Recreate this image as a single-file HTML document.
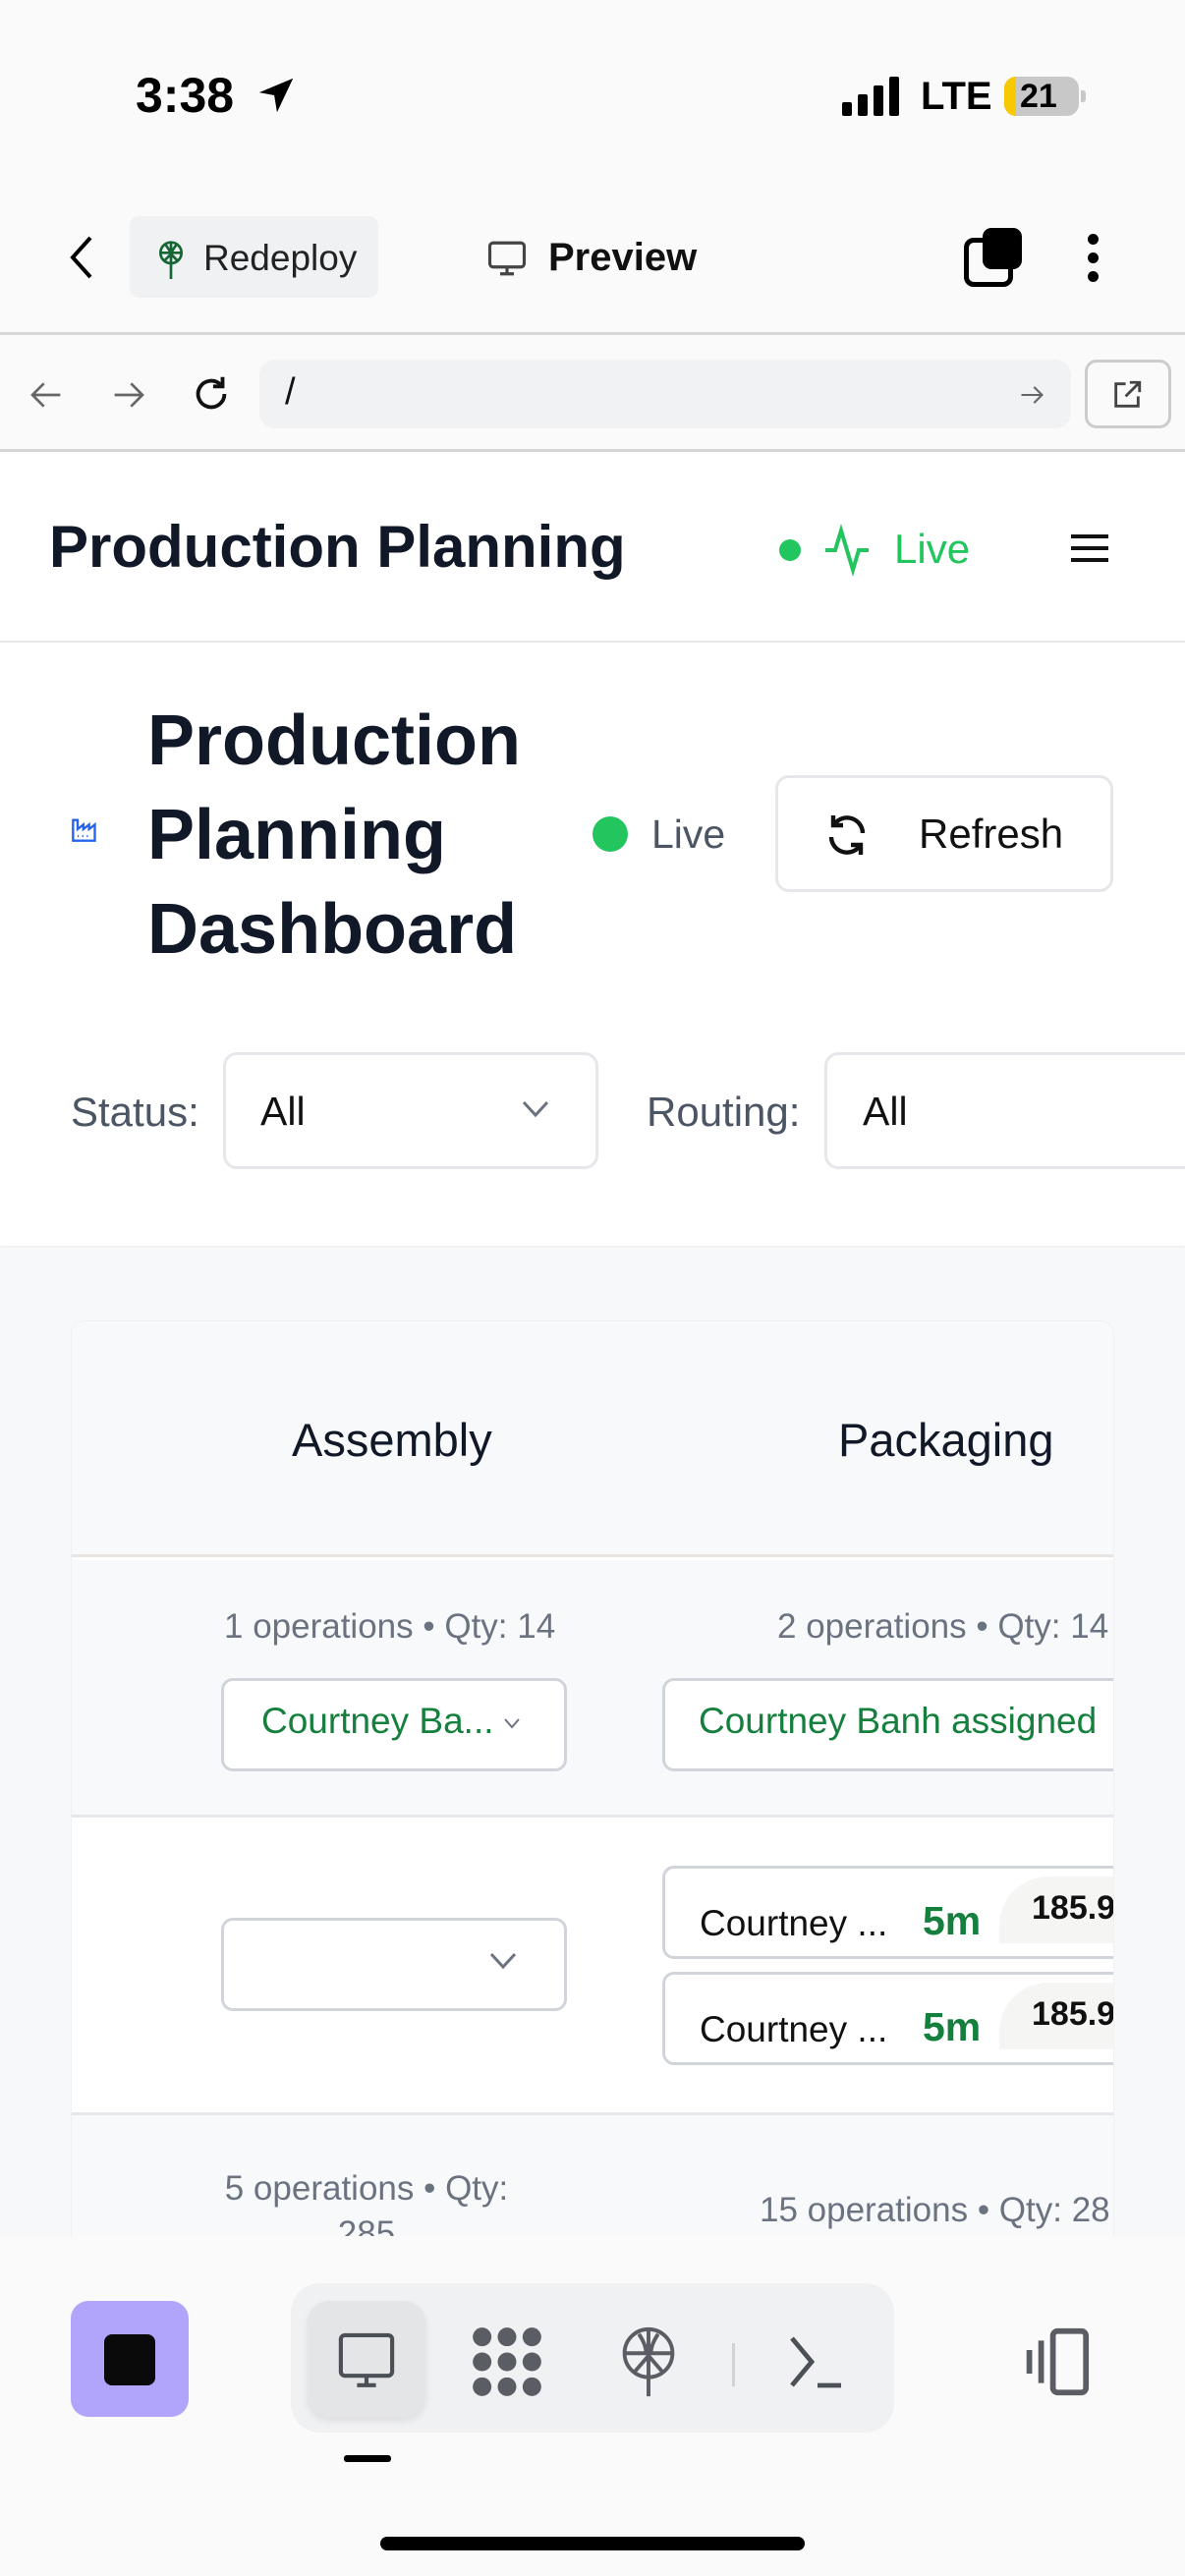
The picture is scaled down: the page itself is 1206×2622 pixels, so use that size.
<!DOCTYPE html>
<html><head><meta charset="utf-8"><style>
*{margin:0;padding:0;box-sizing:border-box}
body{width:1206px;height:2622px;background:#fafafa;font-family:"Liberation Sans",Arial,sans-serif;position:relative;overflow:hidden;color:#111827}
.a{position:absolute}
.t{white-space:nowrap}
</style></head><body>
<!-- status bar -->
<div class="a t" style="left:138px;top:68px;font-size:50px;font-weight:700;color:#000">3:38</div>
<svg class="a" style="left:258px;top:74px" width="46" height="46" viewBox="0 0 24 24"><path d="M21 3L3 10.5l8 1.5 1.5 9z" fill="#000"/></svg>
<div class="a" style="left:857px;top:104px;width:10px;height:14px;background:#000;border-radius:2px"></div>
<div class="a" style="left:873px;top:96px;width:10px;height:22px;background:#000;border-radius:2px"></div>
<div class="a" style="left:889px;top:87px;width:10px;height:31px;background:#000;border-radius:2px"></div>
<div class="a" style="left:905px;top:78px;width:10px;height:40px;background:#000;border-radius:2px"></div>
<div class="a t" style="left:937px;top:76px;font-size:40px;font-weight:700;color:#000">LTE</div>
<div class="a" style="left:1022px;top:78px;width:76px;height:40px;background:#c8c8c8;border-radius:12px;overflow:hidden"><div style="width:12px;height:40px;background:#f8c800"></div></div>
<div class="a" style="left:1100px;top:92px;width:5px;height:12px;background:#c8c8c8;border-radius:0 3px 3px 0"></div>
<div class="a t" style="left:1038px;top:79px;font-size:34px;font-weight:700;color:#000">21</div>
<!-- toolbar -->
<svg class="a" style="left:66px;top:238px" width="34" height="48" viewBox="0 0 34 48"><path d="M26 4L8 24l18 20" fill="none" stroke="#000" stroke-width="4"/></svg>
<div class="a" style="left:132px;top:220px;width:253px;height:83px;background:#f0f1f3;border-radius:10px"></div>
<svg class="a" style="left:158px;top:244px" width="32" height="40" viewBox="0 0 24 30"><circle cx="12" cy="10" r="8" fill="none" stroke="#166534" stroke-width="2"/><path d="M4 10h16M12 2v28M7 16l5-5 5 5M8 4c3 4 5 8 4 10M16 4c-3 4-5 8-4 10" fill="none" stroke="#166534" stroke-width="2"/></svg>
<div class="a t" style="left:207px;top:242px;font-size:37px;color:#222">Redeploy</div>
<svg class="a" style="left:494px;top:242px" width="44" height="42" viewBox="0 0 24 24"><rect x="2" y="3" width="20" height="14" rx="2" fill="none" stroke="#444" stroke-width="1.8"/><path d="M12 17v4M8 21h8" stroke="#444" stroke-width="1.8"/></svg>
<div class="a t" style="left:558px;top:240px;font-size:40px;font-weight:700;color:#111">Preview</div>
<div class="a" style="left:981px;top:242px;width:50px;height:50px;border:5px solid #000;border-radius:10px"></div>
<div class="a" style="left:1000px;top:232px;width:40px;height:42px;background:#000;border-radius:9px"></div>
<div class="a" style="left:1107px;top:238px;width:11px;height:11px;background:#000;border-radius:50%"></div>
<div class="a" style="left:1107px;top:257px;width:11px;height:11px;background:#000;border-radius:50%"></div>
<div class="a" style="left:1107px;top:276px;width:11px;height:11px;background:#000;border-radius:50%"></div>
<div class="a" style="left:0;top:338px;width:1206px;height:3px;background:#d6d6d6"></div>
<!-- url row -->
<svg class="a" style="left:28px;top:382px" width="40" height="40" viewBox="0 0 24 24"><path d="M20 12H4M10 5l-7 7 7 7" fill="none" stroke="#666" stroke-width="1.6"/></svg>
<svg class="a" style="left:110px;top:382px" width="40" height="40" viewBox="0 0 24 24"><path d="M4 12h16M14 5l7 7-7 7" fill="none" stroke="#666" stroke-width="1.6"/></svg>
<svg class="a" style="left:192px;top:378px" width="46" height="46" viewBox="0 0 24 24"><path d="M19 12a7 7 0 1 1-2.1-5" fill="none" stroke="#111" stroke-width="2"/><path d="M18 3v5h-5" fill="none" stroke="#111" stroke-width="2"/></svg>
<div class="a" style="left:264px;top:366px;width:826px;height:70px;background:#f1f2f4;border-radius:16px"></div>
<div class="a t" style="left:290px;top:378px;font-size:38px;color:#111">/</div>
<svg class="a" style="left:1036px;top:388px" width="28" height="28" viewBox="0 0 24 24"><path d="M3 12h18M14 5l7 7-7 7" fill="none" stroke="#666" stroke-width="1.8"/></svg>
<div class="a" style="left:1104px;top:366px;width:88px;height:70px;border:3px solid #ccc;border-radius:12px;background:#fafafa"></div>
<svg class="a" style="left:1130px;top:385px" width="34" height="34" viewBox="0 0 24 24"><path d="M11 4H4v16h16v-7M14 3h7v7M21 3l-10 10" fill="none" stroke="#444" stroke-width="2"/></svg>
<div class="a" style="left:0;top:457px;width:1206px;height:3px;background:#d6d6d6"></div>
<!-- app -->
<div class="a" style="left:0;top:460px;width:1206px;height:808px;background:#fff;box-shadow:0 2px 4px rgba(0,0,0,.06)"></div>
<div class="a t" style="left:50px;top:522px;font-size:60px;font-weight:700;color:#111827">Production Planning</div>
<div class="a" style="left:793px;top:549px;width:22px;height:22px;border-radius:50%;background:#22c55e"></div>
<svg class="a" style="left:838px;top:532px" width="48" height="56" viewBox="0 0 24 28"><path d="M1 14h5l3-10 6 20 3-10h5" fill="none" stroke="#22c55e" stroke-width="2"/></svg>
<div class="a t" style="left:910px;top:535px;font-size:42px;color:#22c55e">Live</div>
<div class="a" style="left:1090px;top:544px;width:38px;height:4px;background:#111"></div>
<div class="a" style="left:1090px;top:556px;width:38px;height:4px;background:#111"></div>
<div class="a" style="left:1090px;top:568px;width:38px;height:4px;background:#111"></div>
<div class="a" style="left:0;top:652px;width:1206px;height:2px;background:#e5e7eb"></div>
<svg class="a" style="left:72px;top:830px" width="28" height="28" viewBox="0 0 24 24"><path d="M2 22V4h4v8l5-4v4l5-4v4l5-4v14z" fill="none" stroke="#2563eb" stroke-width="2"/><path d="M6 18h1M10 18h1M14 18h1" stroke="#2563eb" stroke-width="2"/></svg>
<div class="a" style="left:150px;top:706px;font-size:72px;font-weight:700;line-height:96px;color:#111827">Production<br>Planning<br>Dashboard</div>
<div class="a" style="left:603px;top:831px;width:36px;height:36px;border-radius:50%;background:#22c55e"></div>
<div class="a t" style="left:663px;top:826px;font-size:41px;color:#4b5563">Live</div>
<div class="a" style="left:789px;top:789px;width:344px;height:119px;border:3px solid #e5e7eb;border-radius:14px;background:#fff"></div>
<svg class="a" style="left:838px;top:826px" width="48" height="48" viewBox="0 0 24 24"><path d="M20 11a8 8 0 0 0-14.5-4.5M4 13a8 8 0 0 0 14.5 4.5M5 2v5h5M19 22v-5h-5" fill="none" stroke="#111" stroke-width="2.2"/></svg>
<div class="a t" style="left:935px;top:825px;font-size:42px;color:#111">Refresh</div>
<div class="a t" style="left:72px;top:1108px;font-size:42px;color:#4b5563">Status:</div>
<div class="a" style="left:227px;top:1071px;width:382px;height:119px;border:3px solid #e5e7eb;border-radius:14px;background:#fff"></div>
<div class="a t" style="left:265px;top:1108px;font-size:41px;color:#111">All</div>
<svg class="a" style="left:530px;top:1118px" width="30" height="22" viewBox="0 0 30 22"><path d="M3 4l12 13 12-13" fill="none" stroke="#6b7280" stroke-width="3"/></svg>
<div class="a t" style="left:658px;top:1108px;font-size:42px;color:#4b5563">Routing:</div>
<div class="a" style="left:839px;top:1071px;width:400px;height:119px;border:3px solid #e5e7eb;border-radius:14px;background:#fff"></div>
<div class="a t" style="left:878px;top:1108px;font-size:41px;color:#111">All</div>
<!-- gray area -->
<div class="a" style="left:0;top:1270px;width:1206px;height:1006px;background:#f7f8fa"></div>
<div class="a" style="left:72px;top:1344px;width:1062px;height:940px;background:#fff;border:1px solid #eef0f2;border-radius:14px 14px 0 0;overflow:hidden">
  <div class="a" style="left:0;top:0;width:1062px;height:240px;background:#f8f9fb;border-bottom:3px solid #e7e5e4"></div>
  <div class="a t" style="left:224px;top:93px;font-size:47px;color:#111827">Assembly</div>
  <div class="a t" style="left:780px;top:93px;font-size:47px;color:#111827">Packaging</div>
  <div class="a" style="left:0;top:243px;width:1062px;height:262px;background:#f8f9fb;border-bottom:3px solid #e5e7eb"></div>
  <div class="a t" style="left:155px;top:291px;font-size:35px;color:#6b7280">1 operations • Qty: 14</div>
  <div class="a t" style="left:718px;top:291px;font-size:35px;color:#6b7280">2 operations • Qty: 14</div>
  <div class="a" style="left:152px;top:363px;width:352px;height:95px;border:3px solid #d1d5db;border-radius:12px;background:#fff"></div>
  <div class="a t" style="left:193px;top:386px;font-size:37px;color:#15803d">Courtney Ba...</div>
  <svg class="a" style="left:439px;top:402px" width="18" height="14" viewBox="0 0 18 14"><path d="M2 3l7 8 7-8" fill="none" stroke="#6b7280" stroke-width="2"/></svg>
  <div class="a" style="left:601px;top:363px;width:500px;height:95px;border:3px solid #d1d5db;border-radius:12px;background:#fff"></div>
  <div class="a t" style="left:638px;top:386px;font-size:37px;color:#15803d">Courtney Banh assigned</div>
  <!-- row2 -->
  <div class="a" style="left:0;top:805px;width:1062px;height:3px;background:#e5e7eb"></div>
  <div class="a" style="left:152px;top:607px;width:352px;height:95px;border:3px solid #d1d5db;border-radius:12px;background:#fff"></div>
  <svg class="a" style="left:424px;top:640px" width="30" height="22" viewBox="0 0 30 22"><path d="M3 4l12 13 12-13" fill="none" stroke="#6b7280" stroke-width="3"/></svg>
  <div class="a" style="left:601px;top:554px;width:500px;height:95px;border:3px solid #d1d5db;border-radius:12px;background:#fff;overflow:hidden">
    <div class="a t" style="left:35px;top:35px;font-size:37px;color:#111">Courtney ...</div>
    <div class="a t" style="left:262px;top:30px;font-size:41px;font-weight:700;color:#15803d">5m</div>
    <div class="a" style="left:340px;top:8px;width:160px;height:68px;background:#f5f5f4;border-radius:50px 0 0 0;overflow:hidden"><div class="a t" style="left:33px;top:6px;font-size:34px;font-weight:700;line-height:52px;color:#111">185.9<br>UPH</div></div>
  </div>
  <div class="a" style="left:601px;top:662px;width:500px;height:95px;border:3px solid #d1d5db;border-radius:12px;background:#fff;overflow:hidden">
    <div class="a t" style="left:35px;top:35px;font-size:37px;color:#111">Courtney ...</div>
    <div class="a t" style="left:262px;top:30px;font-size:41px;font-weight:700;color:#15803d">5m</div>
    <div class="a" style="left:340px;top:8px;width:160px;height:68px;background:#f5f5f4;border-radius:50px 0 0 0;overflow:hidden"><div class="a t" style="left:33px;top:6px;font-size:34px;font-weight:700;line-height:52px;color:#111">185.9<br>UPH</div></div>
  </div>
  <div class="a" style="left:0;top:808px;width:1062px;height:200px;background:#f8f9fb"></div>
  <div class="a" style="left:150px;top:860px;width:300px;text-align:center;font-size:35px;line-height:46px;color:#6b7280">5 operations • Qty:<br>285</div>
  <div class="a t" style="left:700px;top:885px;font-size:35px;color:#6b7280">15 operations • Qty: 28</div>
</div>
<!-- bottom bar -->
<div class="a" style="left:0;top:2276px;width:1206px;height:346px;background:#fafafa"></div>
<div class="a" style="left:72px;top:2342px;width:120px;height:118px;background:#b0a4fb;border-radius:18px"></div>
<div class="a" style="left:106px;top:2376px;width:52px;height:52px;background:#0a0a0a;border-radius:8px"></div>
<div class="a" style="left:296px;top:2324px;width:614px;height:152px;background:#f0f1f3;border-radius:30px"></div>
<div class="a" style="left:313px;top:2342px;width:120px;height:118px;background:#e4e5e7;border-radius:22px;box-shadow:0 4px 8px rgba(0,0,0,.08)"></div>
<svg class="a" style="left:340px;top:2370px" width="66" height="66" viewBox="0 0 24 24"><rect x="2.5" y="2.5" width="19" height="15" rx="1.5" fill="none" stroke="#4b4f56" stroke-width="1.5"/><path d="M12 17.5v3M8.5 21h7" stroke="#4b4f56" stroke-width="1.5"/></svg>
<svg class="a" style="left:478px;top:2366px" width="76" height="76" viewBox="0 0 24 24" fill="#5a5d63"><circle cx="4" cy="4" r="3"/><circle cx="12" cy="4" r="3"/><circle cx="20" cy="4" r="3"/><circle cx="4" cy="12" r="3"/><circle cx="12" cy="12" r="3"/><circle cx="20" cy="12" r="3"/><circle cx="4" cy="20" r="3"/><circle cx="12" cy="20" r="3"/><circle cx="20" cy="20" r="3"/></svg>
<svg class="a" style="left:630px;top:2366px" width="60" height="78" viewBox="0 0 24 32"><circle cx="12" cy="12" r="10" fill="none" stroke="#5a5d63" stroke-width="1.6"/><path d="M2 12h20M12 2v28M6 20l6-7 6 7M8 4c2 3 3 6 3 8M16 4c-2 3-3 6-3 8" fill="none" stroke="#5a5d63" stroke-width="1.6"/></svg>
<div class="a" style="left:745px;top:2385px;width:3px;height:44px;background:#d1d5db"></div>
<svg class="a" style="left:800px;top:2376px" width="64" height="56" viewBox="0 0 32 28"><path d="M3 2l10 12-10 12M16 26h12" fill="none" stroke="#4b4f56" stroke-width="2.4"/></svg>
<svg class="a" style="left:1038px;top:2368px" width="72" height="72" viewBox="0 0 30 30"><rect x="14" y="2" width="14" height="26" rx="2" fill="none" stroke="#5a5d63" stroke-width="2.4"/><path d="M9 6v18M4 10v10" stroke="#5a5d63" stroke-width="2.4"/></svg>
<div class="a" style="left:350px;top:2499px;width:48px;height:7px;background:#000;border-radius:3px"></div>
<div class="a" style="left:387px;top:2582px;width:432px;height:14px;background:#000;border-radius:7px"></div>
</body></html>
